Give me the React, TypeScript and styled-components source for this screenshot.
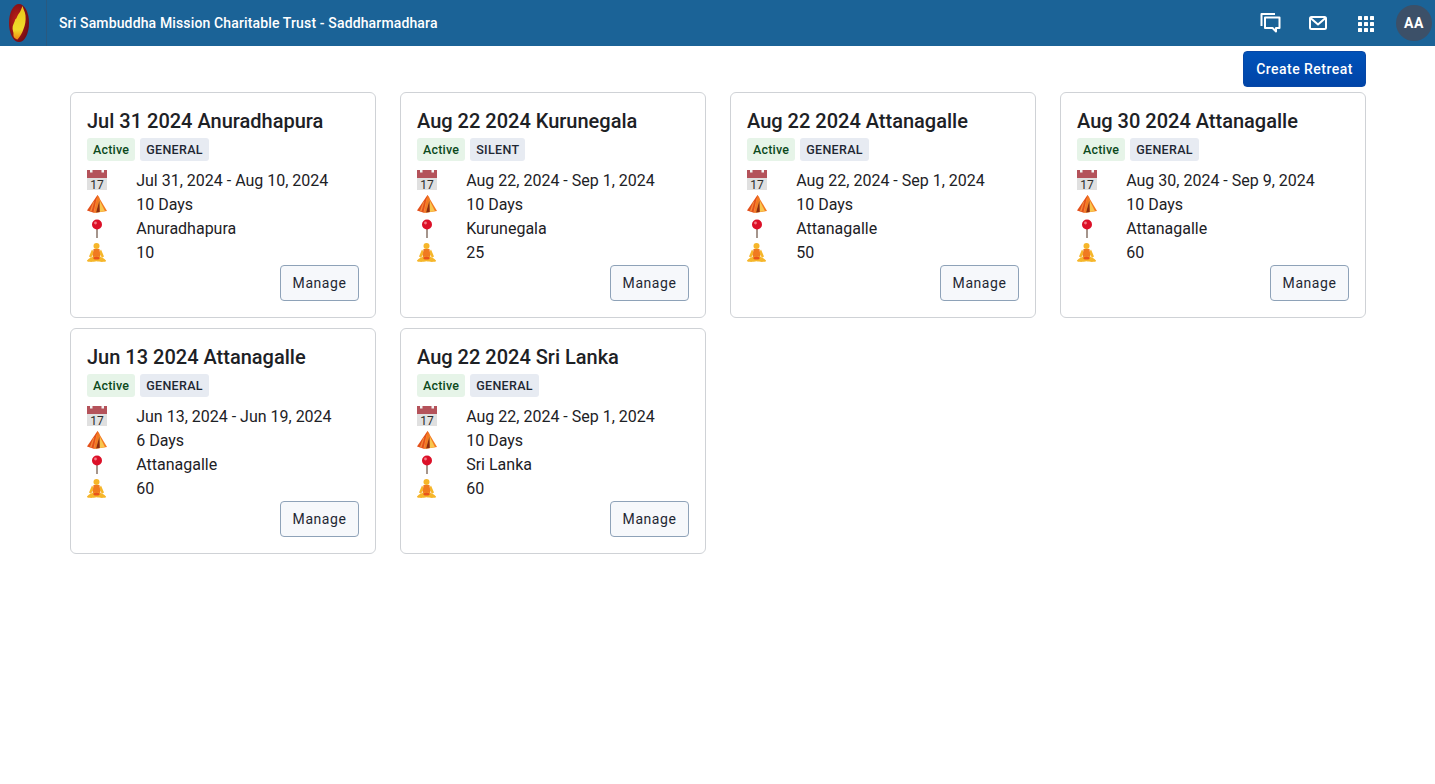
import React from 'react';
import styled, { createGlobalStyle } from 'styled-components';

const GlobalStyle = createGlobalStyle`
  html, body { margin: 0; padding: 0; background: #fff; }
  body { font-family: Roboto, "Liberation Sans", sans-serif; color: #1d2125; }
  * { box-sizing: border-box; }
`;

const Page = styled.div`
  min-height: 784px;
  background: #fff;
`;

const Header = styled.header`
  height: 46px;
  background: #1b6397;
  display: flex;
  align-items: center;
  color: #fff;
`;

const LogoCell = styled.div`
  width: 47px;
  height: 46px;
  display: flex;
  align-items: center;
  padding-left: 9px;
  border-right: 1px solid #2a5a80;
`;

const AppTitle = styled.div`
  margin-left: 12px;
  padding-bottom: 1px;
  font-size: 14px;
  font-weight: 500;
  letter-spacing: 0.14px;
  flex: 1;
`;

const HeaderActions = styled.div`
  display: flex;
  align-items: center;
  margin-right: 3px;
`;

const IconSlot = styled.div<{ $drop?: number }>`
  width: 48px;
  height: 46px;
  display: flex;
  align-items: center;
  justify-content: center;
  padding-top: ${({ $drop }) => $drop ?? 0}px;
`;

const Avatar = styled.div`
  width: 36px;
  height: 36px;
  margin-left: 6px;
  border-radius: 50%;
  background: #3c5068;
  display: flex;
  align-items: center;
  justify-content: center;
  font-size: 14px;
  font-weight: 700;
  letter-spacing: 0.6px;
`;

const Toolbar = styled.div`
  display: flex;
  justify-content: flex-end;
  padding: 5px 69px 5px 70px;
`;

const PrimaryButton = styled.button`
  width: 123px;
  height: 36px;
  border: 1px solid #0747a6;
  border-radius: 4px;
  background: linear-gradient(#0052b8, #0044a8);
  color: #fff;
  font-family: inherit;
  font-size: 14px;
  font-weight: 500;
  letter-spacing: 0.46px;
  padding: 0;
`;

const CardGrid = styled.div`
  display: grid;
  grid-template-columns: repeat(4, 306px);
  column-gap: 24px;
  row-gap: 10px;
  padding: 0 69px 0 70px;
`;

const Card = styled.div`
  height: 226px;
  border: 1px solid #cfd2d6;
  border-radius: 6px;
  padding: 16px;
  background: #fff;
`;

const CardTitle = styled.h3`
  margin: 0;
  font-size: 20px;
  font-weight: 500;
  line-height: 24px;
  color: #1d2125;
`;

const BadgeRow = styled.div`
  display: flex;
  gap: 5px;
  margin-top: 5px;
`;

const Badge = styled.span<{ $tone: 'green' | 'grey' }>`
  height: 23px;
  padding: 0 6px;
  border-radius: 3px;
  display: flex;
  align-items: center;
  font-size: 12.5px;
  font-weight: 500;
  letter-spacing: ${({ $tone }) => ($tone === 'green' ? '0.2px' : '0.32px')};
  background: ${({ $tone }) => ($tone === 'green' ? '#e6f4e8' : '#e7ebf2')};
  color: ${({ $tone }) => ($tone === 'green' ? '#0c4a1c' : '#1f2733')};
`;

const InfoList = styled.div`
  margin-top: 7px;
`;

const InfoRow = styled.div`
  display: flex;
  align-items: center;
  height: 24px;
  font-size: 16px;
  color: #1d2125;
`;

const InfoIcon = styled.div`
  width: 49.2px;
  flex-shrink: 0;
  display: flex;
  align-items: center;
`;

const CardFooter = styled.div`
  display: flex;
  justify-content: flex-end;
  margin-top: 1px;
`;

const ManageButton = styled.button`
  width: 79px;
  height: 36px;
  border: 1px solid #8ea2b8;
  border-radius: 4px;
  background: #f6f8fb;
  color: #1f2733;
  font-family: inherit;
  font-size: 14px;
  letter-spacing: 0.55px;
  padding: 0;
`;

const Logo = () => (
  <svg width="20" height="38" viewBox="0 0 20 38">
    <defs>
      <radialGradient id="logoBg" cx="40%" cy="45%" r="60%">
        <stop offset="0%" stopColor="#c4201a" />
        <stop offset="100%" stopColor="#740c14" />
      </radialGradient>
      <linearGradient id="logoFlame" x1="0" y1="0" x2="0" y2="1">
        <stop offset="0%" stopColor="#e9c51c" />
        <stop offset="70%" stopColor="#f0dc2a" />
        <stop offset="100%" stopColor="#ee8512" />
      </linearGradient>
    </defs>
    <ellipse cx="10" cy="19" rx="10" ry="19" fill="url(#logoBg)" />
    <path d="M13.500 2c.5 3 2.500 5 3 9.500.5 5-.3 9.500-2 13.500-1.300 4-3.500 8-6 10.500-2.500-.5-4.500-2.500-4-5.500.3-2-1.500-4-.8-7.500.5-2.500 2-4.500 2.500-7 .8-.5 1.500-1.500 2-3 .8-2 1.800-3 2.800-4.500 1-2 1.500-3.500 2.500-6z" fill="url(#logoFlame)" />
  </svg>
);

const ChatIcon = () => (
  <svg width="22" height="22" viewBox="0 0 22 22" fill="none" stroke="#fff" strokeWidth="2" strokeLinejoin="round">
    <path d="M2.500 14V2H16" />
    <path d="M6 5.500h14.500V16H17v3.500L13.500 16H6z" />
  </svg>
);

const MailIcon = () => (
  <svg width="18" height="14" viewBox="0 0 18 14" fill="none" stroke="#fff" strokeWidth="2" strokeLinejoin="round">
    <rect x="1" y="1" width="16" height="12" rx="1.500" />
    <path d="M1.500 2 9 8.500 16.500 2" />
  </svg>
);

const AppsIcon = () => (
  <svg width="16" height="16" viewBox="0 0 16 16" fill="#fff">
    {[0, 6, 12].flatMap(y =>
      [0, 6, 12].map(x => <rect key={`${x}-${y}`} x={x} y={y} width="4" height="4" rx="0.6" />)
    )}
  </svg>
);

const CalendarEmoji = () => (
  <svg width="20" height="20" viewBox="0 0 20 20">
    <rect width="20" height="20" fill="#e0e0e0" />
    <rect width="20" height="8" fill="#b4525a" />
    <rect x="3" width="2.500" height="2.500" fill="#f2f2f2" />
    <rect x="14.500" width="2.500" height="2.500" fill="#f2f2f2" />
    <text x="10" y="18.500" textAnchor="middle" fontSize="12" fontFamily="Roboto, sans-serif" fill="#2c2c2c">17</text>
  </svg>
);

const TentEmoji = () => (
  <svg width="20" height="18" viewBox="0 0 20 18">
    <path d="M10.500 0 0 15.500 7.500 18 12.500 3z" fill="#e2501a" />
    <path d="M6 7.500 3 16l1.500.6L7.500 6zM9.500 3.500 6.500 17l1 .4L10.800 3z" fill="#f58a3c" />
    <path d="M10.500 0 20 16 7.500 18z" fill="#f47a22" />
    <path d="M12.500 5 9 17.500 18 16.200z" fill="#f8c64e" />
    <path d="M12.500 5 9 17.500 12.800 17z" fill="#8c2a10" />
  </svg>
);

const PinEmoji = () => (
  <svg width="20" height="19" viewBox="0 0 20 19">
    <rect x="9.100" y="9" width="1.800" height="10" fill="#9c8a80" />
    <circle cx="10" cy="5.500" r="5" fill="#dc1028" />
    <circle cx="8.500" cy="4" r="1.400" fill="#f47a85" />
  </svg>
);

const MeditateEmoji = () => (
  <svg width="20" height="19" viewBox="0 0 20 19">
    <circle cx="9.500" cy="3" r="3" fill="#f6b62a" />
    <path d="M5 6.500 2 13.500l2 1.200 3.200-5zM14 6.500l3 7-2 1.200-3.200-5z" fill="#f6b62a" />
    <path d="M6.500 6h6l.8 8H5.700z" fill="#f07a20" />
    <path d="M0 17.500c2.500-3 5.500-4.200 9.500-4 4-.2 7 1 9.500 4 .3.800-.5 1.300-2 1.300-2.500.2-5.500 0-7.500-.5-2 .5-5 .7-7.500.5-1.500 0-2.300-.5-2-1.300z" fill="#f6b62a" />
    <ellipse cx="9.500" cy="15" rx="3.200" ry="1.600" fill="#e8541c" />
  </svg>
);

interface Retreat {
  title: string;
  status: string;
  kind: string;
  dates: string;
  days: string;
  place: string;
  seats: number;
}

const retreats: Retreat[] = [
  { title: 'Jul 31 2024 Anuradhapura', status: 'Active', kind: 'GENERAL', dates: 'Jul 31, 2024 - Aug 10, 2024', days: '10 Days', place: 'Anuradhapura', seats: 10 },
  { title: 'Aug 22 2024 Kurunegala', status: 'Active', kind: 'SILENT', dates: 'Aug 22, 2024 - Sep 1, 2024', days: '10 Days', place: 'Kurunegala', seats: 25 },
  { title: 'Aug 22 2024 Attanagalle', status: 'Active', kind: 'GENERAL', dates: 'Aug 22, 2024 - Sep 1, 2024', days: '10 Days', place: 'Attanagalle', seats: 50 },
  { title: 'Aug 30 2024 Attanagalle', status: 'Active', kind: 'GENERAL', dates: 'Aug 30, 2024 - Sep 9, 2024', days: '10 Days', place: 'Attanagalle', seats: 60 },
  { title: 'Jun 13 2024 Attanagalle', status: 'Active', kind: 'GENERAL', dates: 'Jun 13, 2024 - Jun 19, 2024', days: '6 Days', place: 'Attanagalle', seats: 60 },
  { title: 'Aug 22 2024 Sri Lanka', status: 'Active', kind: 'GENERAL', dates: 'Aug 22, 2024 - Sep 1, 2024', days: '10 Days', place: 'Sri Lanka', seats: 60 },
];

const RetreatCard: React.FC<{ retreat: Retreat }> = ({ retreat }) => (
  <Card>
    <CardTitle>{retreat.title}</CardTitle>
    <BadgeRow>
      <Badge $tone="green">{retreat.status}</Badge>
      <Badge $tone="grey">{retreat.kind}</Badge>
    </BadgeRow>
    <InfoList>
      <InfoRow><InfoIcon><CalendarEmoji /></InfoIcon>{retreat.dates}</InfoRow>
      <InfoRow><InfoIcon><TentEmoji /></InfoIcon>{retreat.days}</InfoRow>
      <InfoRow><InfoIcon><PinEmoji /></InfoIcon>{retreat.place}</InfoRow>
      <InfoRow><InfoIcon><MeditateEmoji /></InfoIcon>{retreat.seats}</InfoRow>
    </InfoList>
    <CardFooter>
      <ManageButton>Manage</ManageButton>
    </CardFooter>
  </Card>
);

export default function App() {
  return (
    <Page>
      <GlobalStyle />
      <Header>
        <LogoCell><Logo /></LogoCell>
        <AppTitle>Sri Sambuddha Mission Charitable Trust - Saddharmadhara</AppTitle>
        <HeaderActions>
          <IconSlot><ChatIcon /></IconSlot>
          <IconSlot><MailIcon /></IconSlot>
          <IconSlot $drop={2}><AppsIcon /></IconSlot>
          <Avatar>AA</Avatar>
        </HeaderActions>
      </Header>
      <Toolbar>
        <PrimaryButton>Create Retreat</PrimaryButton>
      </Toolbar>
      <CardGrid>
        {retreats.map(r => <RetreatCard key={r.title} retreat={r} />)}
      </CardGrid>
    </Page>
  );
}
